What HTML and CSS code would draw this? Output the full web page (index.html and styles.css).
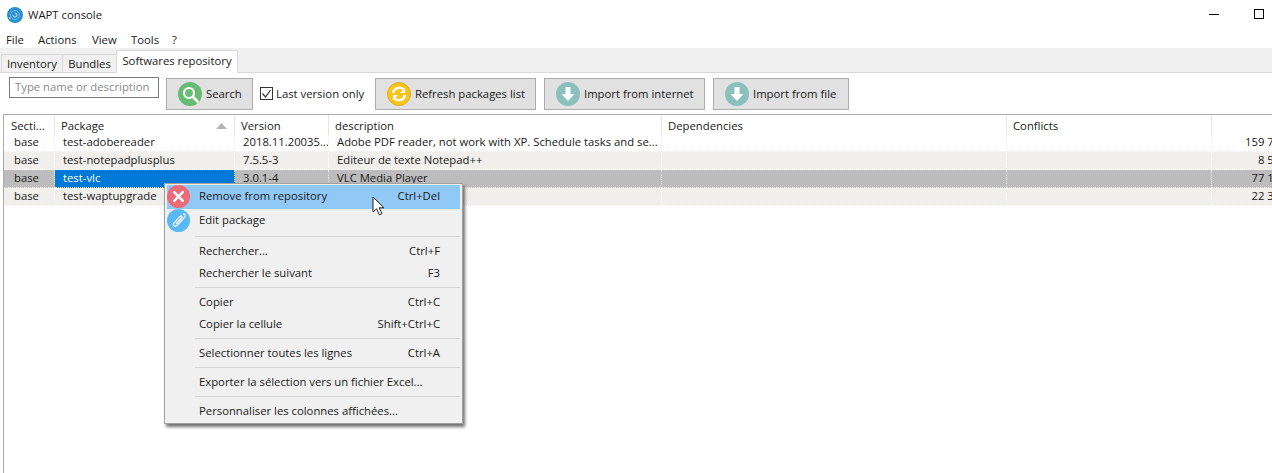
FILE: index.html
```html
<!DOCTYPE html>
<html lang="en">
<head>
<meta charset="utf-8">
<title>WAPT console</title>
<link rel="stylesheet" href="styles.css">
</head>
<body>
<div class="window">
  <header class="titlebar">
    <svg class="app-icon" viewBox="0 0 16 16" width="16" height="16"><circle cx="8" cy="8" r="8" fill="#2a8fd0"/><circle cx="8" cy="8" r="4.500" fill="none" stroke="#6fbde8" stroke-width="1"/><path d="M8 6a2 2 0 1 1-2 2" fill="none" stroke="#bfe6f8" stroke-width="1"/><circle cx="3" cy="11" r="1" fill="#8fd0f0"/></svg>
    <span class="title">WAPT console</span>
    <span class="win-controls">
      <span class="win-min"></span>
      <span class="win-max"></span>
    </span>
  </header>
  <nav class="menubar">
    <span class="menu-file">File</span><span class="menu-actions">Actions</span><span class="menu-view">View</span><span class="menu-tools">Tools</span><span class="menu-help">?</span>
  </nav>
  <div class="tabs">
    <span class="tab tab-inv">Inventory</span>
    <span class="tab tab-bun">Bundles</span>
    <span class="tab tab-active">Softwares repository</span>
  </div>
  <div class="toolbar">
    <div class="search-input">Type name or description</div>
    <button class="btn btn-search">
      <svg viewBox="0 0 24 24" width="24" height="24"><circle cx="12" cy="12" r="12" fill="#66bb75"/><circle cx="11" cy="11" r="5" fill="none" stroke="#fff" stroke-width="2.200"/><path d="M15 15l4.500 4.500" stroke="#fff" stroke-width="2.600" stroke-linecap="round"/></svg>
      <span>Search</span>
    </button>
    <label class="check"><span class="box"><svg viewBox="0 0 13 13" width="13" height="13"><path d="M2.500 6.500l3 3.500 5-7" fill="none" stroke="#333" stroke-width="1.200"/></svg></span>Last version only</label>
    <button class="btn btn-refresh">
      <svg viewBox="0 0 24 24" width="24" height="24"><circle cx="12" cy="12" r="11.500" fill="#fcc419" stroke="#e0ad20"/><path d="M6 11a6.200 6.200 0 0 1 10.500-3.500" fill="none" stroke="#fff" stroke-width="2.400"/><path d="M18 6v5h-5z" fill="#fff"/><path d="M18 13a6.200 6.200 0 0 1-10.500 3.500" fill="none" stroke="#fff" stroke-width="2.400"/><path d="M6 18v-5h5z" fill="#fff"/></svg>
      <span>Refresh packages list</span>
    </button>
    <button class="btn btn-net">
      <svg viewBox="0 0 24 24" width="24" height="24"><circle cx="12" cy="12" r="12" fill="#8cc0bc"/><path d="M9.500 5h5v7h4l-6.500 7-6.500-7h4z" fill="#fff"/></svg>
      <span>Import from internet</span>
    </button>
    <button class="btn btn-file">
      <svg viewBox="0 0 24 24" width="24" height="24"><circle cx="12" cy="12" r="12" fill="#8cc0bc"/><path d="M9.500 5h5v7h4l-6.500 7-6.500-7h4z" fill="#fff"/></svg>
      <span>Import from file</span>
    </button>
  </div>
  <main class="grid">
    <div class="row head">
      <div class="cell">Secti...</div>
      <div class="cell sorted">Package<svg class="sort" viewBox="0 0 11 6" width="11" height="6"><path d="M5.500 0L11 6H0z" fill="#b5b5b5"/></svg></div>
      <div class="cell">Version</div>
      <div class="cell">description</div>
      <div class="cell">Dependencies</div>
      <div class="cell">Conflicts</div>
      <div class="cell"></div>
    </div>
    <div class="row">
      <div class="cell">base</div><div class="cell">test-adobereader</div><div class="cell">2018.11.20035...</div><div class="cell">Adobe PDF reader, not work with XP. Schedule tasks and se...</div><div class="cell"></div><div class="cell"></div><div class="cell num">159 763 824</div>
    </div>
    <div class="row alt">
      <div class="cell">base</div><div class="cell">test-notepadplusplus</div><div class="cell">7.5.5-3</div><div class="cell">Editeur de texte Notepad++</div><div class="cell"></div><div class="cell"></div><div class="cell num">8 523 456</div>
    </div>
    <div class="row sel">
      <div class="cell">base</div><div class="cell focus">test-vlc</div><div class="cell">3.0.1-4</div><div class="cell">VLC Media Player</div><div class="cell"></div><div class="cell"></div><div class="cell num">77 104 512</div>
    </div>
    <div class="row alt">
      <div class="cell">base</div><div class="cell">test-waptupgrade</div><div class="cell"></div><div class="cell"></div><div class="cell"></div><div class="cell"></div><div class="cell num">22 364 160</div>
    </div>
  </main>

  <div class="context">
    <div class="ci hover"><svg class="ci-icon" viewBox="0 0 24 24" width="23" height="23"><circle cx="12" cy="12" r="12" fill="#ef6a78"/><path d="M7.500 7.500l9 9M16.500 7.500l-9 9" stroke="#fff" stroke-width="2.600" stroke-linecap="round"/></svg><span>Remove from repository</span><span>Ctrl+Del</span></div>
    <div class="ci"><svg class="ci-icon" viewBox="0 0 24 24" width="23" height="23"><circle cx="12" cy="12" r="12" fill="#5ab9f5"/><path d="M16.500 5.500c1.500-1 3.500 1 2.500 2.500l-8.500 9c-2 2-5 .5-3.500-2l7-7.500c1-1 2.500.5 1.500 1.500l-6 6.500" fill="none" stroke="#fff" stroke-width="1.300"/></svg><span>Edit package</span></div>
    <div class="sep"></div>
    <div class="ci small"><span>Rechercher...</span><span>Ctrl+F</span></div>
    <div class="ci small"><span>Rechercher le suivant</span><span>F3</span></div>
    <div class="sep"></div>
    <div class="ci small"><span>Copier</span><span>Ctrl+C</span></div>
    <div class="ci small"><span>Copier la cellule</span><span>Shift+Ctrl+C</span></div>
    <div class="sep"></div>
    <div class="ci small"><span>Selectionner toutes les lignes</span><span>Ctrl+A</span></div>
    <div class="sep"></div>
    <div class="ci small"><span>Exporter la sélection vers un fichier Excel...</span></div>
    <div class="sep"></div>
    <div class="ci small"><span>Personnaliser les colonnes affichées...</span></div>
  </div>
  <svg class="pointer" viewBox="0 0 14 20" width="14" height="20"><path d="M1 1v15l3.600-3.200 2.700 6 2.600-1.200-2.700-5.800H12z" fill="#fff" stroke="#222" stroke-width="1"/></svg>
</div>
</body>
</html>
```
FILE: styles.css
```css
* { box-sizing: border-box; }
html, body { margin: 0; padding: 0; background: #fff; }
body {
  font-family: "Open Sans", "Noto Sans", sans-serif;
  font-size: 11.3px;
  color: #1a1a1a;
}
.window { position: relative; width: 1272px; height: 473px; overflow: hidden; display: flex; flex-direction: column; }

.titlebar { height: 30px; flex: none; display: flex; align-items: center; padding-left: 7px; }
.app-icon { flex: none; }
.title { margin-left: 5px; padding-bottom: 2px; }
.win-controls { margin-left: auto; display: flex; align-items: center; }
.win-min { width: 10px; height: 1px; background: #000; margin-right: 35px; margin-bottom: 2px; }
.win-max { width: 10px; height: 10px; border: 1px solid #000; margin-right: 8px; margin-bottom: 2px; }

.menubar { height: 18px; flex: none; display: flex; align-items: center; padding-left: 6px; }
.menu-file { width: 32px; }
.menu-actions { width: 54px; }
.menu-view { width: 39px; }
.menu-tools { width: 41px; }

.tabs { height: 25px; flex: none; background: #f0f0f0; border-bottom: 1px solid #d9d9d9; display: flex; align-items: flex-end; padding-left: 1px; }
.tab { height: 18px; display: flex; align-items: center; justify-content: center; border: 1px solid #d9d9d9; border-bottom: 0; padding-bottom: 1px; }
.tab-inv { width: 62px; }
.tab-bun { width: 54px; border-left: 0; }
.tab-active { width: 122px; height: 23px; background: #fff; margin-bottom: -1px; padding-bottom: 3px; border-left: 1px solid #d9d9d9; margin-left: -1px; }

.toolbar { height: 41px; flex: none; display: flex; align-items: flex-start; padding: 5px 0 0 9px; position: relative; }
.search-input { width: 150px; height: 21px; margin-top: -1px; border: 1px solid #7a7a7a; color: #8a8a8a; padding-left: 5px; line-height: 18px; white-space: nowrap; overflow: hidden; }
.btn { height: 32px; background: #e1e1e1; border: 1px solid #adadad; font: inherit; color: inherit; display: flex; align-items: center; padding: 0 0 0 11px; gap: 4px; white-space: nowrap; }
.btn span { padding-bottom: 2px; }
.btn-search { width: 87px; margin-left: 7px; }
.check { display: flex; align-items: center; height: 32px; margin-left: 7px; width: 115px; white-space: nowrap; padding-bottom: 1px; }
.box { width: 13px; height: 13px; border: 1px solid #333; margin-right: 3px; display: block; position: relative; flex: none; }
.box svg { display: block; margin: -1px; }
.btn-refresh { width: 161px; margin-left: 0; }
.btn-net { width: 161px; margin-left: 8px; }
.btn-file { width: 136px; margin-left: 8px; }

.grid { margin-left: 3px; flex: 1; border-top: 1px solid #a9a9b0; border-left: 1px solid #a9a9b0; overflow: hidden; }
.row { display: grid; grid-template-columns: 51px 180px 94px 333px 345px 205px 105px; height: 18px; width: 1313px; }
.row.head { height: 19px; }
.cell { padding-left: 8px; line-height: 16px; white-space: nowrap; overflow: hidden; border-right: 1px dotted #ececec; border-bottom: 1px dotted #ececec; }
.cell:first-child { padding-left: 10px; }
.head .cell { padding-left: 6px; border-right: 1px solid #e5e5e5; border-bottom: 0; line-height: 22px; position: relative; }
.head .cell:first-child { padding-left: 7px; }
.sort { position: absolute; right: 7px; top: 8px; }
.num { padding: 0 7px 0 0; text-align: right; }
.alt .cell { background: #f0efeb; border-color: #fff; }
.sel .cell { background: #bcbcbc; border-color: #fff; }
.sel .cell.focus { background: #0078d7; color: #fff; }

.context { position: absolute; left: 164px; top: 183px; width: 299px; height: 241px; background: #f0f0f0; border: 1px solid #a0a0a0; padding: 1px 2px; box-shadow: 2px 3px 3px rgba(0,0,0,.55); }
.ci { height: 24px; position: relative; display: flex; align-items: center; justify-content: space-between; padding: 0 20px 3px 32px; white-space: nowrap; }
.ci.small { height: 22px; padding-bottom: 2px; }
.ci.hover { background: #90c8f6; }
.ci-icon { position: absolute; left: 0; top: 0; }
.sep { height: 7px; margin-left: 28px; position: relative; }
.sep::after { content: ""; position: absolute; left: 0; right: 0; top: 3px; height: 1px; background: #d7d7d7; }

.pointer { position: absolute; left: 372px; top: 196px; }
```
